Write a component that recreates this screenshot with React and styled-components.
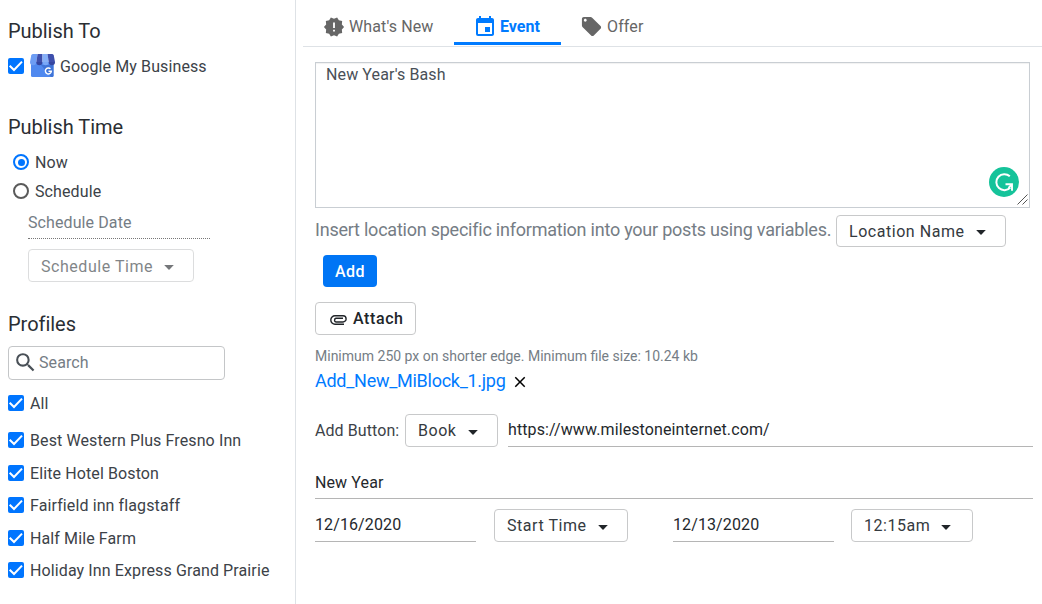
import React from "react";
import styled, { createGlobalStyle } from "styled-components";
import { MdNewReleases, MdEvent, MdLocalOffer, MdSearch, MdClose } from "react-icons/md";

const GlobalStyle = createGlobalStyle`
  *, *::before, *::after { box-sizing: border-box; }
  body {
    margin: 0;
    background: #fff;
    color: #3c4248;
    font-family: Roboto, "Liberation Sans", sans-serif;
    font-size: 16px;
  }
  svg { display: block; flex: none; }
`;

const Page = styled.div`
  display: flex;
  width: 1042px;
  height: 604px;
  overflow: hidden;
`;

const Sidebar = styled.aside`
  flex: none;
  width: 296px;
  padding: 16px 0 0 8px;
  border-right: 1px solid #dee2e6;
`;

const Section = styled.section`
  margin-bottom: ${(p) => p.$gap || 0}px;
`;

const Heading = styled.h2`
  margin: 0;
  height: 30px;
  line-height: 30px;
  font-size: 20px;
  font-weight: 400;
  color: #2a2e33;
  letter-spacing: -0.03px;
  font-variant-ligatures: common-ligatures;
`;

const OptionRow = styled.label`
  display: flex;
  align-items: center;
  height: ${(p) => p.$height}px;
  padding-left: ${(p) => p.$indent || 0}px;
`;

const OptionText = styled.span`
  margin-left: ${(p) => p.$gap || 6}px;
  padding-top: ${(p) => p.$drop || 0}px;
  line-height: 20px;
  letter-spacing: 0.11px;
  white-space: nowrap;
`;

const ProfileList = styled.div`
  margin-top: 5px;
`;

const CheckSquare = styled.span`
  display: flex;
  flex: none;
  width: 16px;
  height: 16px;
  margin-bottom: ${(p) => p.$lift || 0}px;
  border-radius: 2px;
  background: #0075ff;
`;

const RadioCircle = styled.span`
  display: flex;
  align-items: center;
  justify-content: center;
  flex: none;
  width: 16px;
  height: 16px;
  margin-bottom: 1px;
  border: 2px solid ${(p) => (p.$on ? "#0075ff" : "#5a5a5a")};
  border-radius: 50%;
  &::after {
    content: "";
    width: 7px;
    height: 7px;
    border-radius: 50%;
    background: ${(p) => (p.$on ? "#0075ff" : "transparent")};
  }
`;

const StoreIcon = styled.svg`
  margin: 0 0 2px 6px;
`;

const ScheduleDate = styled.div`
  width: 182px;
  height: 33px;
  margin: 6px 0 0 20px;
  line-height: 33px;
  color: #757d85;
  letter-spacing: 0.1px;
  border-bottom: 1px dotted #777;
`;

const Select = styled.button`
  display: flex;
  align-items: center;
  flex: none;
  width: ${(p) => p.$width}px;
  height: ${(p) => p.$height || 33}px;
  margin: ${(p) => p.$margin || "0"};
  padding: ${(p) => (p.$faded ? 2 : 0)}px 0 0 12px;
  border: 1px solid #c8c9ca;
  border-radius: 4px;
  background: #fff;
  color: #343a40;
  font: inherit;
  letter-spacing: 0.54px;
  white-space: nowrap;
  opacity: ${(p) => (p.$faded ? 0.62 : 1)};
  svg { margin: ${(p) => (p.$faded ? 1 : 3)}px 0 0 11px; color: #212529; }
`;

const SearchBox = styled.div`
  display: flex;
  align-items: center;
  width: 217px;
  height: 34px;
  margin: 7px 0;
  padding: 0 0 1px 4px;
  border: 1px solid #c4c6c8;
  border-radius: 4px;
  color: #757d85;
  letter-spacing: 0.1px;
  svg { color: #495057; margin: 0 1px 1px 0; }
`;

const Main = styled.main`
  flex: 1;
  padding-left: 7px;
`;

const Tabs = styled.nav`
  display: flex;
  height: 47px;
  padding-bottom: 1px;
  border-bottom: 1px solid #dee2e6;
`;

const Tab = styled.a`
  display: flex;
  align-items: center;
  width: ${(p) => p.$width}px;
  height: 45px;
  padding: ${(p) => (p.$active ? 11 : 8)}px 0 0 ${(p) => p.$pad}px;
  border-bottom: ${(p) => (p.$active ? "3px solid #007bff" : "0")};
  color: ${(p) => (p.$active ? "#007bff" : "#666")};
  font-weight: ${(p) => (p.$active ? 700 : 400)};
  letter-spacing: ${(p) => (p.$active ? 0 : 0.12)}px;
  white-space: nowrap;
  svg { margin-right: ${(p) => p.$gap}px; }
`;

const Form = styled.div`
  padding: 15px 0 0 12px;
`;

const MessageBox = styled.div`
  position: relative;
  width: 715px;
  height: 146px;
  padding: 2px 10px;
  border: 1px solid #c9ced3;
  box-shadow: inset 0 1px 1px rgba(0, 0, 0, 0.06);
  color: #495057;
  line-height: 19px;
  letter-spacing: 0.12px;
`;

const Grammar = styled.svg`
  position: absolute;
  right: 10px;
  bottom: 10px;
`;

const Grip = styled.svg`
  position: absolute;
  right: 1px;
  bottom: 2px;
`;

const VariableRow = styled.div`
  display: flex;
  align-items: center;
  height: 32px;
  margin-top: 7px;
`;

const Hint = styled.span`
  width: 521px;
  margin-top: -3px;
  font-size: 18px;
  letter-spacing: -0.23px;
  font-variant-ligatures: common-ligatures;
  color: #757d85;
  white-space: nowrap;
`;

const AddButton = styled.button`
  display: block;
  width: 54px;
  height: 32px;
  margin: 8px 0 0 8px;
  padding: 0;
  border: 0;
  border-radius: 4px;
  background: #0075f5;
  color: #fff;
  font: inherit;
  font-weight: 500;
  letter-spacing: 0.5px;
`;

const AttachButton = styled.button`
  display: flex;
  align-items: center;
  width: 101px;
  height: 33px;
  margin: 15px 0 0;
  padding: 0 0 0 14px;
  border: 1px solid #c8c9ca;
  border-radius: 4px;
  background: #fff;
  color: #212529;
  font: inherit;
  font-weight: 500;
  letter-spacing: 0.6px;
  svg { margin: 3px 6px 0 0; }
`;

const SizeNote = styled.p`
  height: 20px;
  margin: 11px 0 0;
  line-height: 20px;
  font-size: 14px;
  color: #757d85;
`;

const FileRow = styled.div`
  display: flex;
  align-items: center;
  height: 28px;
  margin-top: 1px;
  font-size: 18px;
  letter-spacing: -0.27px;
  svg { margin: 2px 0 0 5px; color: #000; }
`;

const FileName = styled.a`
  margin-top: -2px;
  color: #007bff;
`;

const LinkRow = styled.div`
  display: flex;
  height: 33px;
  margin-top: 19px;
`;

const LinkLabel = styled.span`
  width: 90px;
  line-height: 33px;
  letter-spacing: 0.08px;
  white-space: nowrap;
`;

const LineField = styled.div`
  flex: none;
  width: ${(p) => p.$width}px;
  height: 33px;
  margin: ${(p) => p.$margin || "0"};
  line-height: ${(p) => p.$line || 31}px;
  border-bottom: 1px solid #b5b5b5;
  color: #24282c;
  letter-spacing: 0.11px;
`;

const DateRow = styled.div`
  display: flex;
  height: 33px;
  margin-top: 10px;
`;

const Checkbox = ({ lift }) => (
  <CheckSquare $lift={lift}>
    <svg width="16" height="16" viewBox="0 0 16 16" fill="none" stroke="#fff" strokeWidth="2">
      <path d="M1.700 7.700 6 12 14 3.600" />
    </svg>
  </CheckSquare>
);

const Caret = () => (
  <svg width="10" height="5" viewBox="0 0 10 5" fill="currentColor">
    <path d="M.2 0h9.600L5.500 4.600q-.5.500-1 0z" />
  </svg>
);

const Paperclip = () => (
  <svg width="17" height="10" viewBox="0 0 17 10" fill="none" stroke="currentColor" strokeWidth="1.400">
    <path d="M14 9.200H5A4.200 4.200 0 0 1 5 .8h8a3.100 3.100 0 0 1 0 6.200H6a1.900 1.900 0 0 1 0-3.700h7" />
  </svg>
);

const Dropdown = ({ children, ...rest }) => (
  <Select type="button" {...rest}>
    {children}
    <Caret />
  </Select>
);

const Storefront = () => (
  <StoreIcon width="25" height="23" viewBox="0 0 25 23">
    <path d="M1 8h22.500v13.500q0 1.500-1.500 1.500H2.500Q1 23 1 21.500z" fill="#5089ef" />
    <path d="M11 11h12.500v10.500q0 1.500-1.500 1.500h-1z" fill="#3f74d8" />
    <path d="M2.800 0h4.800L6.300 8H0l1.200-6.500Q1.500 0 2.800 0z" fill="#6d9df4" />
    <path d="M7.600 0h4.900v8H6.300z" fill="#3e4fac" />
    <path d="M12.500 0h5l1.200 8h-6.200z" fill="#86b0f8" />
    <path d="M17.500 0h4.800q1.200 0 1.500 1.500L25 8h-6.300z" fill="#3e4fac" />
    <path d="M0 8h6.300a3.150 3.300 0 0 1-6.300 0z" fill="#6d9df4" />
    <path d="M6.300 8h6.200a3.100 3.300 0 0 1-6.200 0z" fill="#3546a0" />
    <path d="M12.500 8h6.200a3.100 3.300 0 0 1-6.200 0z" fill="#79a7f7" />
    <path d="M18.700 8H25a3.150 3.300 0 0 1-6.300 0z" fill="#3546a0" />
    <path d="M20.500 14.800a3 3 0 1 0 .9 2.400h-2.900" fill="none" stroke="#fff" strokeWidth="1.400" />
  </StoreIcon>
);

const profiles = [
  "Best Western Plus Fresno Inn",
  "Elite Hotel Boston",
  "Fairfield inn flagstaff",
  "Half Mile Farm",
  "Holiday Inn Express Grand Prairie",
];

export default function App() {
  return (
    <>
      <GlobalStyle />
      <Page>
        <Sidebar>
          <Section $gap={25}>
            <Heading>Publish To</Heading>
            <OptionRow $height={41}>
              <Checkbox lift={1} />
              <Storefront />
              <OptionText $gap={5}>Google My Business</OptionText>
            </OptionRow>
          </Section>
          <Section $gap={27}>
            <Heading>Publish Time</Heading>
            <OptionRow $height={41} $indent={5}>
              <RadioCircle $on />
              <OptionText>Now</OptionText>
            </OptionRow>
            <OptionRow $height={17} $indent={5}>
              <RadioCircle />
              <OptionText>Schedule</OptionText>
            </OptionRow>
            <ScheduleDate>Schedule Date</ScheduleDate>
            <Dropdown $width={166} $margin="10px 0 0 20px" $faded>Schedule Time</Dropdown>
          </Section>
          <Section>
            <Heading>Profiles</Heading>
            <SearchBox>
              <MdSearch size={25} />
              Search
            </SearchBox>
            <OptionRow $height={32}>
              <Checkbox />
              <OptionText $drop={2}>All</OptionText>
            </OptionRow>
            <ProfileList>
              {profiles.map((name) => (
                <OptionRow key={name} $height={32.5}>
                  <Checkbox />
                  <OptionText $drop={2}>{name}</OptionText>
                </OptionRow>
              ))}
            </ProfileList>
          </Section>
        </Sidebar>
        <Main>
          <Tabs>
            <Tab $width={151} $pad={20} $gap={4}><MdNewReleases size={22} />What's New</Tab>
            <Tab $width={107} $pad={19} $gap={3} $active><MdEvent size={24} />Event</Tab>
            <Tab $width={120} $pad={19} $gap={4}><MdLocalOffer size={23} />Offer</Tab>
          </Tabs>
          <Form>
            <MessageBox>
              New Year's Bash
              <Grammar width="30" height="30" viewBox="0 0 30 30" fill="none">
                <circle cx="15" cy="15" r="15" fill="#15c39a" />
                <path d="M20.800 9.300A8 8 0 1 0 21.300 20.500" stroke="#fff" strokeWidth="2" />
                <path d="M16.500 17.300h6.500v6.500M22.500 17.800l-3 3" stroke="#fff" strokeWidth="1.900" />
              </Grammar>
              <Grip width="11" height="11" viewBox="0 0 11 11" stroke="#555" strokeWidth="1">
                <path d="M.5 10.500l10-10M5.500 10.500l5-5" />
              </Grip>
            </MessageBox>
            <VariableRow>
              <Hint>Insert location specific information into your posts using variables.</Hint>
              <Dropdown $width={170} $height={32}>Location Name</Dropdown>
            </VariableRow>
            <AddButton type="button">Add</AddButton>
            <AttachButton type="button"><Paperclip />Attach</AttachButton>
            <SizeNote>Minimum 250 px on shorter edge. Minimum file size: 10.24 kb</SizeNote>
            <FileRow>
              <FileName>Add_New_MiBlock_1.jpg</FileName>
              <MdClose size={18} />
            </FileRow>
            <LinkRow>
              <LinkLabel>Add Button:</LinkLabel>
              <Dropdown $width={93}>Book</Dropdown>
              <LineField $width={525} $margin="0 0 0 10px">https://www.milestoneinternet.com/</LineField>
            </LinkRow>
            <LineField $width={718} $margin="19px 0 0" $line={33}>New Year</LineField>
            <DateRow>
              <LineField $width={161}>12/16/2020</LineField>
              <Dropdown $width={134} $margin="0 0 0 18px">Start Time</Dropdown>
              <LineField $width={161} $margin="0 0 0 45px">12/13/2020</LineField>
              <Dropdown $width={122} $margin="0 0 0 17px">12:15am</Dropdown>
            </DateRow>
          </Form>
        </Main>
      </Page>
    </>
  );
}
